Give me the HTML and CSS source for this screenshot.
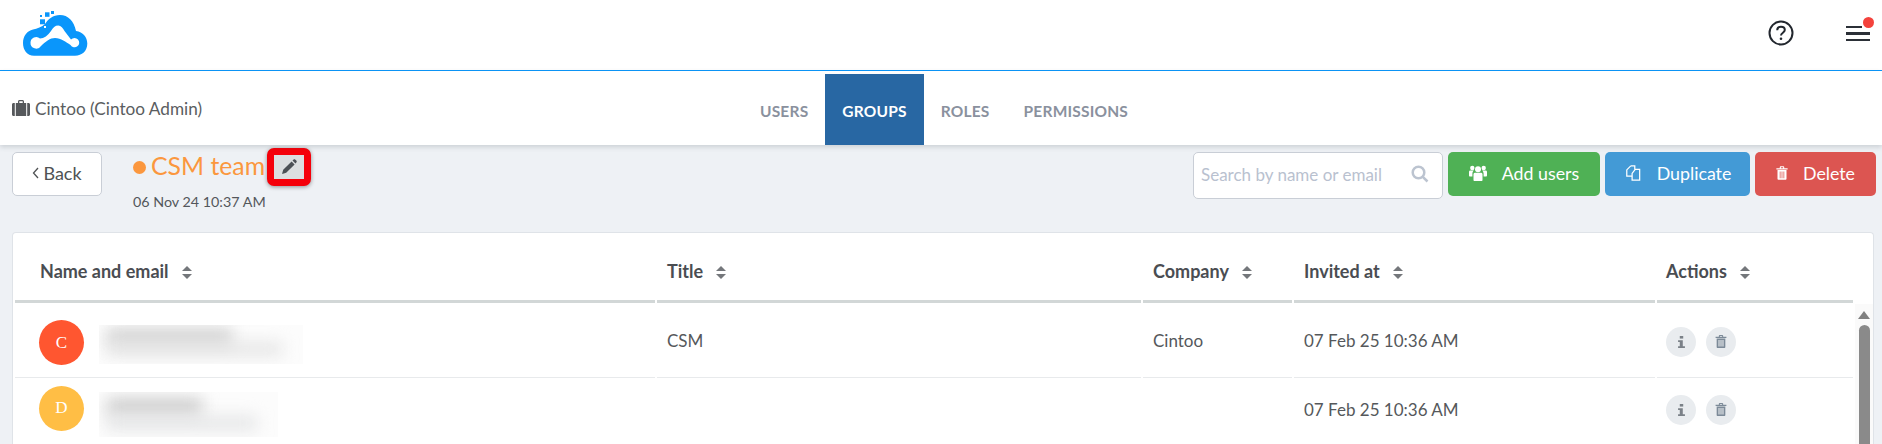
FILE: index.html
```html
<!DOCTYPE html>
<html lang="en">
<head>
<meta charset="utf-8">
<title>CSM team</title>
<link rel="stylesheet" href="styles.css">
</head>
<body>
<header class="topbar">
  <svg class="logo" viewBox="0 0 65 46" aria-label="Cintoo">
    <path class="logo-blue" d="M11 45.700C4 45.700 0 40 0 33C0 26 4 21 10 19.500C14 18.500 19 17 22 14C25 9 30 5 37 5C45 5 51 11 53 21C60 22 64.300 27 64.300 33.500C64.300 41 59 45.700 52 45.700Z"/>
    <path class="logo-white" d="M7.500 32.700A5.700 5.700 0 0 1 17 28.500C21 28.500 25 25.500 28 21C30 17.500 32 15.500 35.300 15.500C38 15.500 40 18 41.500 21L48 29.500A4.700 4.700 0 1 1 47.500 35C43 32 38 28 32 28C27 28 23 31.500 18 36A5.700 5.700 0 0 1 7.500 32.700Z"/>
    <rect class="logo-blue" x="17" y="5" width="2" height="2"/>
    <rect class="logo-blue" x="22" y="2.300" width="4.500" height="4.500"/>
    <rect class="logo-blue" x="28" y="1" width="3" height="3"/>
    <rect class="logo-blue" x="17" y="9.300" width="5" height="5"/>
    <rect class="logo-blue" x="27" y="9" width="4" height="4"/>
    <rect class="logo-blue" x="16" y="18" width="2.500" height="2.500"/>
    <rect class="logo-white" x="21" y="16" width="2" height="2"/>
  </svg>
  <div class="top-actions">
    <svg class="help" viewBox="0 0 26 26" aria-label="Help">
      <circle cx="13" cy="13" r="11.500"/>
      <path d="M9.200 10.200C9.300 8 11 6.800 13 6.800C15.200 6.800 16.800 8.200 16.800 10C16.800 12.600 13 12.800 13 15.400"/>
      <circle class="help-dot" cx="13" cy="18.800" r="1.300"/>
    </svg>
    <div class="menu">
      <span class="menu-line menu-line-short"></span>
      <span class="menu-line"></span>
      <span class="menu-line"></span>
      <span class="menu-dot"></span>
    </div>
  </div>
</header>

<nav class="subnav">
  <div class="account">
    <svg class="briefcase" viewBox="0 0 18 16" aria-hidden="true">
      <path d="M6 3V1.500C6 .7 6.700 0 7.500 0H10.500C11.300 0 12 .7 12 1.500V3H10.700V1.300H7.300V3Z"/>
      <path d="M3.800 3H14.200V16H3.800ZM2.800 3V16H1.500C.7 16 0 15.300 0 14.500V4.500C0 3.700 .7 3 1.500 3ZM15.200 3H16.500C17.300 3 18 3.700 18 4.500V14.500C18 15.300 17.300 16 16.500 16H15.200Z"/>
    </svg>
    <span>Cintoo (Cintoo Admin)</span>
  </div>
  <div class="tabs">
    <a class="tab">USERS</a>
    <a class="tab tab-active">GROUPS</a>
    <a class="tab">ROLES</a>
    <a class="tab">PERMISSIONS</a>
  </div>
</nav>

<main class="content">
  <section class="toolbar">
    <button class="back">
      <svg class="chev" viewBox="0 0 7 12" aria-hidden="true"><path d="M6 1 1.500 6 6 11"/></svg>
      Back
    </button>
    <div class="group-info">
      <div class="group-title">
        <span class="group-dot"></span>
        <span class="group-name">CSM team</span>
        <span class="edit-mark">
          <svg class="pencil" viewBox="0 0 16 16" aria-hidden="true">
            <path d="M10.600 2.400 13.600 5.400 5.200 13.800 1 15 2.200 10.800ZM11.500 1.500 12.400.7C13 .1 13.800.1 14.400.7L15.300 1.600C15.900 2.200 15.900 3 15.300 3.600L14.500 4.500Z"/>
          </svg>
        </span>
      </div>
      <div class="group-date">06 Nov 24 10:37 AM</div>
    </div>
    <div class="tool-actions">
      <div class="search">
        <span class="search-text">Search by name or email</span>
        <svg class="search-icon" viewBox="0 0 18 18" aria-hidden="true">
          <circle cx="7.500" cy="7.500" r="5.800"/>
          <path d="M11.800 11.800 16.500 16.500"/>
        </svg>
      </div>
      <button class="btn btn-green">
        <svg class="btn-icon" viewBox="0 0 18 16" aria-hidden="true">
          <circle cx="9" cy="4.200" r="3"/><circle cx="3.300" cy="3" r="2.200"/><circle cx="14.700" cy="3" r="2.200"/>
          <path d="M4.500 9.500C4.500 8 5.500 7.800 6.500 7.800H11.500C12.500 7.800 13.500 8 13.500 9.500V15C13.500 15.600 13 16 12.500 16H5.500C5 16 4.500 15.600 4.500 15Z"/>
          <path d="M0 7C0 6 .8 5.600 1.500 5.600H5C4 6.200 3.400 7.500 3.400 8.800V11.500H1C.4 11.500 0 11 0 10.500ZM18 7C18 6 17.200 5.600 16.500 5.600H13C14 6.200 14.600 7.500 14.600 8.800V11.500H17C17.600 11.500 18 11 18 10.500Z"/>
        </svg>
        Add users
      </button>
      <button class="btn btn-blue">
        <svg class="btn-icon btn-icon-line" viewBox="0 0 17 18" aria-hidden="true">
          <path d="M6 1H10.500V5"/>
          <path d="M6 1 1.500 5.500V12.500H7.500"/>
          <path d="M11 5H16V17H7.500V9.500Z"/>
        </svg>
        Duplicate
      </button>
      <button class="btn btn-red">
        <svg class="btn-icon btn-icon-trash" viewBox="0 0 16 18" aria-hidden="true">
          <path d="M5 2.500V1.200C5 .5 5.500 0 6.200 0H9.800C10.500 0 11 .5 11 1.200V2.500H15.500V4.300H.5V2.500ZM6.500 1.300V2.500H9.500V1.300Z"/>
          <path fill-rule="evenodd" d="M2 5H14V16.500C14 17.300 13.400 18 12.600 18H3.400C2.600 18 2 17.300 2 16.500ZM5 7V16H6V7ZM7.500 7V16H8.500V7ZM10 7V16H11V7Z"/>
        </svg>
        Delete
      </button>
    </div>
  </section>

  <section class="card">
    <table class="users">
      <colgroup>
        <col class="col-name"><col class="col-title"><col class="col-company"><col class="col-invited"><col class="col-actions">
      </colgroup>
      <thead>
        <tr>
          <th class="first">Name and email<span class="sort"></span></th>
          <th>Title<span class="sort"></span></th>
          <th>Company<span class="sort"></span></th>
          <th>Invited at<span class="sort"></span></th>
          <th class="last">Actions<span class="sort"></span></th>
        </tr>
      </thead>
      <tbody>
        <tr>
          <td class="first">
            <div class="person">
              <span class="avatar avatar-red">C</span>
              <span class="blurred blurred-a"><i class="smear smear-1"></i><i class="smear smear-2"></i></span>
            </div>
          </td>
          <td>CSM</td>
          <td>Cintoo</td>
          <td>07 Feb 25 10:36 AM</td>
          <td class="last">
            <div class="row-actions">
              <span class="round"><svg viewBox="0 0 8 14" class="ico-info" aria-hidden="true"><rect x="2" y="0" width="4" height="3"/><path d="M0 5H5.500V12H8V14H0V12H2V7H0Z"/></svg></span>
              <span class="round"><svg viewBox="0 0 16 18" class="ico-trash" aria-hidden="true"><path d="M5 2.500V1.200C5 .5 5.500 0 6.200 0H9.800C10.500 0 11 .5 11 1.200V2.500H15.500V4.300H.5V2.500ZM6.500 1.300V2.500H9.500V1.300Z"/><path fill-rule="evenodd" d="M2 5H14V16.500C14 17.300 13.400 18 12.600 18H3.400C2.600 18 2 17.300 2 16.500ZM4.500 7V16H6V7ZM7.250 7V16H8.750V7ZM10 7V16H11.500V7Z"/></svg></span>
            </div>
          </td>
        </tr>
        <tr>
          <td class="first">
            <div class="person">
              <span class="avatar avatar-yellow">D</span>
              <span class="blurred blurred-b"><i class="smear smear-3"></i><i class="smear smear-4"></i></span>
            </div>
          </td>
          <td></td>
          <td></td>
          <td>07 Feb 25 10:36 AM</td>
          <td class="last">
            <div class="row-actions">
              <span class="round"><svg viewBox="0 0 8 14" class="ico-info" aria-hidden="true"><rect x="2" y="0" width="4" height="3"/><path d="M0 5H5.500V12H8V14H0V12H2V7H0Z"/></svg></span>
              <span class="round"><svg viewBox="0 0 16 18" class="ico-trash" aria-hidden="true"><path d="M5 2.500V1.200C5 .5 5.500 0 6.200 0H9.800C10.500 0 11 .5 11 1.200V2.500H15.500V4.300H.5V2.500ZM6.500 1.300V2.500H9.500V1.300Z"/><path fill-rule="evenodd" d="M2 5H14V16.500C14 17.300 13.400 18 12.600 18H3.400C2.600 18 2 17.300 2 16.500ZM4.500 7V16H6V7ZM7.250 7V16H8.750V7ZM10 7V16H11.500V7Z"/></svg></span>
            </div>
          </td>
        </tr>
      </tbody>
    </table>
    <div class="scrollbar">
      <span class="scroll-arrow"></span>
      <span class="scroll-thumb"></span>
    </div>
  </section>
</main>
</body>
</html>
```

FILE: styles.css
```css
* { box-sizing: border-box; }
html, body { margin: 0; height: 444px; overflow: hidden; }
body {
  background: #eef1f5;
  color: #4f5254;
  font-family: "Lato", "Liberation Sans", sans-serif;
  font-size: 17px;
}

/* Top bar */
.topbar {
  height: 71px;
  background: #fff;
  border-bottom: 1px solid #0a96fb;
  display: flex;
  align-items: center;
  justify-content: space-between;
  padding: 0 12px 0 23px;
}
.logo { width: 65px; height: 46px; margin-top: -4px; display: block; }
.logo-blue { fill: #0a96fb; }
.logo-white { fill: #fff; }
.top-actions { display: flex; align-items: center; gap: 52px; margin-top: -4px; }
.help { width: 26px; height: 26px; display: block; fill: none; stroke: #22272e; stroke-width: 2; }
.help .help-dot { fill: #22272e; stroke: none; }
.menu { position: relative; width: 24px; display: flex; flex-direction: column; gap: 4px; align-items: flex-start; margin-top: 1px; }
.menu-line { display: block; width: 24px; height: 2.500px; background: #2b3037; }
.menu-line-short { width: 16px; }
.menu-dot { position: absolute; right: -4px; top: -9px; width: 11px; height: 11px; border-radius: 50%; background: #f4423c; }

/* Sub navigation */
.subnav {
  height: 74px;
  background: #fff;
  padding-top: 3px;
  display: grid;
  grid-template-columns: 1fr auto 1fr;
  box-shadow: 0 2px 5px rgba(60, 70, 80, .2);
  position: relative;
}
.account { display: flex; align-items: center; gap: 5px; padding-left: 12px; margin-top: -3px; font-size: 17.200px; color: #5a5d60; }
.briefcase { width: 18px; height: 16px; fill: #55585b; display: block; }
.tabs { display: flex; margin-left: 6px; }
.tab {
  display: flex;
  align-items: center;
  padding: 2px 17px 0;
  font-size: 15.500px;
  font-weight: 700;
  color: #8a919e;
  letter-spacing: .2px;
}
.tab-active { background: #2867a3; color: #fff; }

/* Toolbar */
.toolbar {
  height: 87px;
  display: flex;
  padding: 7px 6px 0 12px;
  align-items: flex-start;
}
.back {
  width: 90px;
  height: 44px;
  background: #fff;
  border: 1px solid #c9ced6;
  border-radius: 5px;
  font: inherit;
  font-size: 18px;
  color: #4f5254;
  padding: 0 0 2px;
  display: flex;
  align-items: center;
  justify-content: center;
  gap: 4px;
}
.chev { width: 7px; height: 12px; fill: none; stroke: #4f5254; stroke-width: 1.300; display: block; }
.group-info { margin-left: 31px; margin-top: -4px; }
.group-title { display: flex; align-items: center; height: 38px; }
.group-dot { width: 13px; height: 13px; border-radius: 50%; background: #fb973e; margin-right: 5px; margin-top: 1px; }
.group-name { font-size: 24.800px; color: #fb973e; margin-top: -3px; }
.edit-mark {
  width: 44px;
  height: 38px;
  margin-left: 2px;
  border: 7px solid #f5000a;
  border-radius: 7px;
  background: #dcdee0;
  box-shadow: 0 1px 4px rgba(0, 0, 0, .4);
  display: flex;
  align-items: center;
  justify-content: center;
}
.pencil { width: 16px; height: 16px; fill: #4c5055; display: block; }
.group-date { font-size: 14.300px; margin-top: 7px; color: #53575b; }
.tool-actions { margin-left: auto; display: flex; gap: 5px; align-items: flex-start; }
.search {
  width: 250px;
  height: 47px;
  background: #fff;
  border: 1px solid #c9ced6;
  border-radius: 5px;
  display: flex;
  align-items: center;
  justify-content: space-between;
  padding: 0 13px 2px 7px;
  color: #b9c1cf;
  font-size: 17px;
}
.search-icon { width: 18px; height: 18px; fill: none; stroke: #bcc4d0; stroke-width: 2.500; margin-top: -2px; }
.btn {
  height: 44px;
  border: 0;
  border-radius: 5px;
  color: #fff;
  font: inherit;
  font-size: 17.800px;
  display: flex;
  align-items: center;
  justify-content: center;
  gap: 15px;
  padding: 0 0 2px;
}
.btn-green { width: 152px; background: #4fb155; }
.btn-blue { width: 145px; background: #439ad6; }
.btn-red { width: 121px; background: #dc5551; }
.btn-icon { width: 18px; height: 16px; fill: #fff; display: block; }
.btn-icon-line { fill: none; stroke: #fff; stroke-width: 1.400; }
.btn-icon-trash { width: 12px; height: 14px; }

/* Card and table */
.card {
  margin: 0 8px 0 12px;
  height: 212px;
  background: #fff;
  border: 1px solid #dfe3e8;
  border-bottom: 0;
  border-radius: 4px 4px 0 0;
  display: flex;
}
.users {
  width: 1842px;
  table-layout: fixed;
  border-collapse: separate;
  border-spacing: 2px 0;
  align-self: flex-start;
  flex: none;
}
.col-name { width: 640px; }
.col-title { width: 484px; }
.col-company { width: 149px; }
.col-invited { width: 361px; }
.col-actions { width: 196px; }
th {
  height: 70px;
  text-align: left;
  padding: 8px 0 0 10px;
  font-size: 18px;
  font-weight: 700;
  color: #4a4d52;
  border-bottom: 3px solid #d2d7d7;
}
td {
  height: 75px;
  padding: 0 0 2px 10px;
  border-bottom: 1px solid #e8eaec;
  font-size: 17px;
  color: #55585b;
}
tbody tr:first-child td { padding-bottom: 0; }
tbody tr:last-child td { height: 65px; border-bottom: 0; }
th.first { padding-left: 25px; }
td.first { padding-left: 24px; }
th.last, td.last { padding-left: 9px; }
.sort {
  display: inline-block;
  position: relative;
  width: 10px;
  height: 13px;
  margin-left: 13px;
  vertical-align: -1px;
}
.sort::before, .sort::after {
  content: "";
  position: absolute;
  left: 0;
  border-left: 5px solid transparent;
  border-right: 5px solid transparent;
}
.sort::before { top: 0; border-bottom: 5.500px solid #74777b; }
.sort::after { bottom: 0; border-top: 5.500px solid #74777b; }
.person { display: flex; align-items: flex-start; gap: 15px; margin-top: 3px; }
tbody tr:first-child .person { margin-top: 5px; }
tbody tr:first-child .row-actions { margin-top: 3px; }
.avatar {
  width: 45px;
  height: 45px;
  border-radius: 50%;
  color: #fff;
  display: flex;
  align-items: center;
  justify-content: center;
  font-family: "Liberation Serif", serif;
  font-size: 17px;
  flex: none;
}
.avatar-red { background: #ff5630; }
.avatar-yellow { background: #ffbe45; }
.blurred { position: relative; display: block; overflow: hidden; background: #fcfcfc; }
.blurred-a { width: 204px; height: 39px; margin-top: 5px; }
.blurred-b { width: 179px; height: 45px; margin-top: 6px; }
.smear { position: absolute; display: block; filter: blur(8px); }
.smear-1 { left: 8px; top: 4px; width: 125px; height: 16px; background: #cfcfcf; }
.smear-2 { left: 8px; top: 18px; width: 175px; height: 12px; background: #e2e2e2; }
.smear-3 { left: 8px; top: 6px; width: 95px; height: 18px; background: #cdcdcd; }
.smear-4 { left: 8px; top: 24px; width: 150px; height: 14px; background: #e4e5e6; }
.row-actions { display: flex; gap: 10px; }
.round {
  width: 30px;
  height: 30px;
  border-radius: 50%;
  background: #e9ecef;
  display: flex;
  align-items: center;
  justify-content: center;
}
.ico-info { width: 7px; height: 12px; fill: #7b8188; display: block; }
.ico-trash { width: 12px; height: 13px; fill: #7c8a98; display: block; }
.scrollbar {
  flex: 1;
  margin-top: 71px;
  background: #fafafa;
  display: flex;
  flex-direction: column;
  align-items: center;
  padding-top: 7px;
  gap: 6px;
}
.scroll-arrow { width: 0; height: 0; border-left: 6.500px solid transparent; border-right: 6.500px solid transparent; border-bottom: 8px solid #808080; }
.scroll-thumb { width: 11px; flex: 1; background: #8a8a8a; border-radius: 6px 6px 0 0; }
```
